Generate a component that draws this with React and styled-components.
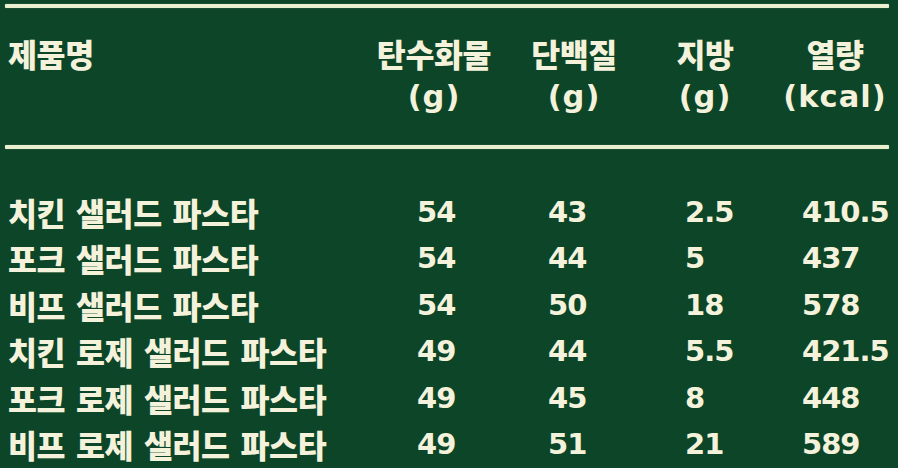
import React from "react";
import styled, { createGlobalStyle } from "styled-components";

const Global = createGlobalStyle`
  html, body { margin: 0; padding: 0; background: #0c4528; }
  body { font-family: "DejaVu Sans", "Noto Sans CJK KR", sans-serif; }
`;

const Board = styled.div`
  width: 898px;
  height: 468px;
  overflow: hidden;
  background: #0c4528;
  color: #f5f2dc;
  font-weight: 700;
  font-size: 29px;
  box-sizing: border-box;
  padding-top: 4px;
`;

const Rule = styled.div`
  height: 4px;
  margin: 0 9px 0 5px;
  background: #e9efcf;
  border-radius: 1px;
  box-shadow: 0 0 1px rgba(233, 239, 207, 0.6);
`;

const cols = "364px 124px 156px 106px 154px";

const Header = styled.div`
  display: grid;
  grid-template-columns: ${cols};
  padding: 23px 0 26px 8px;
  line-height: 44px;
`;

const HeadCell = styled.div`
  display: flex;
  flex-direction: column;
  align-items: ${(p) => (p.$left ? "flex-start" : "center")};
  white-space: nowrap;
`;

const Hangul = styled.span`
  font-family: "Noto Sans CJK KR", sans-serif;
  font-weight: 900;
  font-size: 31.5px;
  letter-spacing: -0.4px;
`;

const Unit = styled.span`
  font-size: 30.5px;
  letter-spacing: 1px;
`;

const Body = styled.div`
  padding: 40px 0 0 8px;
`;

const Row = styled.div`
  display: grid;
  grid-template-columns: ${cols};
  line-height: 46.4px;
  white-space: nowrap;
`;

const Name = styled.div`
  font-family: "Noto Sans CJK KR", sans-serif;
  font-weight: 900;
  font-size: 31.5px;
  letter-spacing: -0.4px;
  word-spacing: 4px;
`;

const Num = styled.div`
  padding-left: ${(p) => p.$pad}px;
  letter-spacing: -1px;
`;

const pads = [45, 52, 33, 44];

const heads = [
  ["탄수화물", "(g)"],
  ["단백질", "(g)"],
  ["지방", "(g)"],
  ["열량", "(kcal)"],
];

const rows = [
  ["치킨 샐러드 파스타", "54", "43", "2.5", "410.5"],
  ["포크 샐러드 파스타", "54", "44", "5", "437"],
  ["비프 샐러드 파스타", "54", "50", "18", "578"],
  ["치킨 로제 샐러드 파스타", "49", "44", "5.5", "421.5"],
  ["포크 로제 샐러드 파스타", "49", "45", "8", "448"],
  ["비프 로제 샐러드 파스타", "49", "51", "21", "589"],
];

export default function App() {
  return (
    <>
      <Global />
      <Board>
        <Rule />
        <Header>
          <HeadCell $left>
            <Hangul>제품명</Hangul>
          </HeadCell>
          {heads.map(([k, u]) => (
            <HeadCell key={k}>
              <Hangul>{k}</Hangul>
              <Unit>{u}</Unit>
            </HeadCell>
          ))}
        </Header>
        <Rule />
        <Body>
          {rows.map((r) => (
            <Row key={r[0]}>
              <Name>{r[0]}</Name>
              {r.slice(1).map((v, i) => (
                <Num key={i} $pad={pads[i]}>
                  {v}
                </Num>
              ))}
            </Row>
          ))}
        </Body>
      </Board>
    </>
  );
}
